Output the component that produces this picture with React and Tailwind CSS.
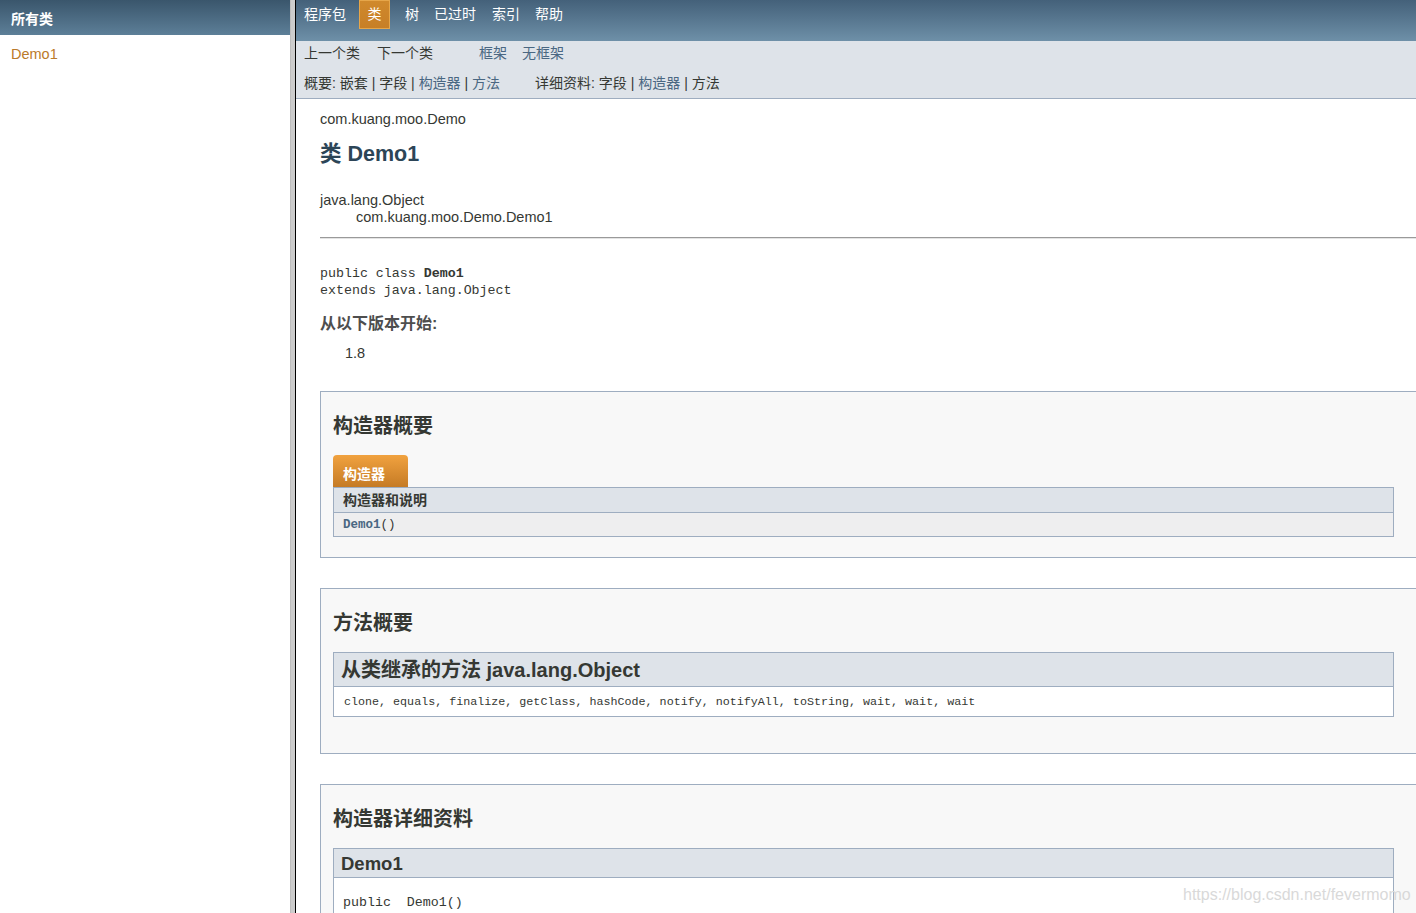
const sans = "font-['Liberation_Sans','Noto_Sans_CJK_SC',sans-serif]";
const mono = "font-['Liberation_Mono','Noto_Sans_CJK_SC',monospace]";

export default function App() {
  return (
    <div className={`relative flex h-[913px] w-[1416px] overflow-hidden bg-white text-[#353833] ${sans}`}>
      {/* Left frame */}
      <div className="flex w-[290px] shrink-0 flex-col">
        <div className="flex h-[35px] items-center bg-gradient-to-b from-[#3a566c] to-[#5d7f98] px-[11px] pt-[3px] text-[14px] font-bold text-white">
          所有类
        </div>
        <div className="mt-[11px] px-[11px] text-[14.5px] leading-[16px] text-[#bb7a2a]">Demo1</div>
      </div>
      {/* Frame divider */}
      <div className="w-[5px] shrink-0 border-l border-[#bdbdbd] bg-[#cccccc]" />
      <div className="w-px shrink-0 bg-black" />
      {/* Right frame */}
      <div className="flex min-w-0 flex-1 flex-col overflow-hidden">
        <div className="flex h-[41px] shrink-0 items-start bg-gradient-to-b from-[#44617a] to-[#6e90a8] text-[14px] text-white">
          <div className="ml-[8px] flex h-[28px] items-center">程序包</div>
          <div className="ml-[13px] flex h-[29px] w-[31px] items-center justify-center border border-[#e6a64a] bg-gradient-to-b from-[#d0892c] to-[#c77f26] pb-[1px]">类</div>
          <div className="ml-[15px] flex h-[28px] items-center">树</div>
          <div className="ml-[15px] flex h-[28px] items-center">已过时</div>
          <div className="ml-[16px] flex h-[28px] items-center">索引</div>
          <div className="ml-[15px] flex h-[28px] items-center">帮助</div>
        </div>
        <div className="h-[58px] shrink-0 border-b border-[#9eadc0] bg-[#dee3e9] text-[14px] leading-[16px]">
          <div className="flex pl-[8px] pt-[4px]">
            <span>上一个类</span>
            <span className="ml-[17px]">下一个类</span>
            <span className="ml-[46px] text-[#4a6782]">框架</span>
            <span className="ml-[15px] text-[#4a6782]">无框架</span>
          </div>
          <div className="mt-[14px] flex whitespace-pre pl-[8px]">
            <span>概要: 嵌套 | 字段 | </span>
            <span className="text-[#4a6782]">构造器</span>
            <span> | </span>
            <span className="text-[#4a6782]">方法</span>
            <span className="ml-[35px]">详细资料: 字段 | </span>
            <span className="text-[#4a6782]">构造器</span>
            <span> | 方法</span>
          </div>
        </div>
        {/* Content */}
        <div className="w-[1120px] pl-[24px]">
          <div className="mt-[12px] text-[14.5px] leading-[16px]">com.kuang.moo.Demo</div>
          <h2 className="mt-[15px] text-[21.5px] font-bold leading-[24px] text-[#2c4557]">类 Demo1</h2>
          <div className="mt-[26px] text-[14.5px] leading-[17px]">java.lang.Object</div>
          <div className="pl-[36px] text-[14.5px] leading-[17px]">com.kuang.moo.Demo.Demo1</div>
          <div className="mt-[11px] h-[2px] border-t border-b border-t-[#9a9a9a] border-b-[#e4e4e4]" />
          <div className={`mt-[26px] text-[13.3px] leading-[17px] ${mono}`}>
            <div className="whitespace-pre">public class <span className="font-bold">Demo1</span></div>
            <div className="whitespace-pre">extends java.lang.Object</div>
          </div>
          <div className="mt-[15px] text-[16px] font-bold leading-[20px] text-[#4e4e4e]">从以下版本开始:</div>
          <div className="mt-[11px] pl-[25px] text-[14.5px] leading-[16px]">1.8</div>

          {/* Constructor summary */}
          <div className="mt-[30px] w-[1110px] border border-[#9eadc0] bg-[#f8f8f8] pb-[20px] pl-[12px] pt-[22px]">
            <h3 className="text-[20px] font-bold leading-[24px]">构造器概要</h3>
            <div className="mt-[17px] h-[32px] w-[75px] rounded-t-[4px] bg-gradient-to-b from-[#f1a23f] to-[#c57b25] pl-[10px] pt-[11px] text-[14px] font-bold leading-[16px] text-white">
              构造器
            </div>
            <div className="w-[1061px] border border-[#9eadc0]">
              <div className="flex h-[25px] items-center border-b border-[#9eadc0] bg-[#dee3e9] pl-[9px] pt-[1px] text-[14px] font-semibold">
                构造器和说明
              </div>
              <div className={`h-[23px] bg-[#eeeeef] pl-[9px] pt-[4px] text-[12.5px] leading-[17px] ${mono}`}>
                <span className="font-bold text-[#4a6782]">Demo1</span>
                <span>()</span>
              </div>
            </div>
          </div>

          {/* Method summary */}
          <div className="mt-[30px] w-[1110px] border border-[#9eadc0] bg-[#f8f8f8] pb-[36px] pl-[12px] pt-[22px]">
            <h3 className="text-[20px] font-bold leading-[24px]">方法概要</h3>
            <div className="mt-[17px] w-[1061px] border border-[#9eadc0]">
              <div className="flex h-[34px] items-center border-b border-[#9eadc0] bg-[#dee3e9] pl-[7px] pt-[1px] text-[20px] font-bold">
                从类继承的方法 java.lang.Object
              </div>
              <div className={`flex h-[29px] items-center bg-white pl-[10px] pt-[2px] text-[11.7px] ${mono}`}>
                clone, equals, finalize, getClass, hashCode, notify, notifyAll, toString, wait, wait, wait
              </div>
            </div>
          </div>

          {/* Constructor detail */}
          <div className="mt-[30px] w-[1110px] border border-[#9eadc0] bg-[#f8f8f8] pb-[40px] pl-[12px] pt-[22px]">
            <h3 className="text-[20px] font-bold leading-[24px]">构造器详细资料</h3>
            <div className="mt-[17px] w-[1061px] border border-[#9eadc0]">
              <div className="flex h-[29px] items-center border-b border-[#9eadc0] bg-[#dee3e9] pl-[7px] pt-[1px] text-[18.5px] font-bold">
                Demo1
              </div>
              <div className={`h-[80px] bg-white pl-[9px] pt-[16px] text-[13.3px] leading-[17px] whitespace-pre ${mono}`}>
                public  Demo1()
              </div>
            </div>
          </div>
        </div>
      </div>
      {/* Watermark */}
      <div className="pointer-events-none absolute left-[1183px] top-[885px] text-[16px] leading-[20px] text-[#d9d9d9]">
        https://blog.csdn.net/fevermomo
      </div>
    </div>
  );
}
